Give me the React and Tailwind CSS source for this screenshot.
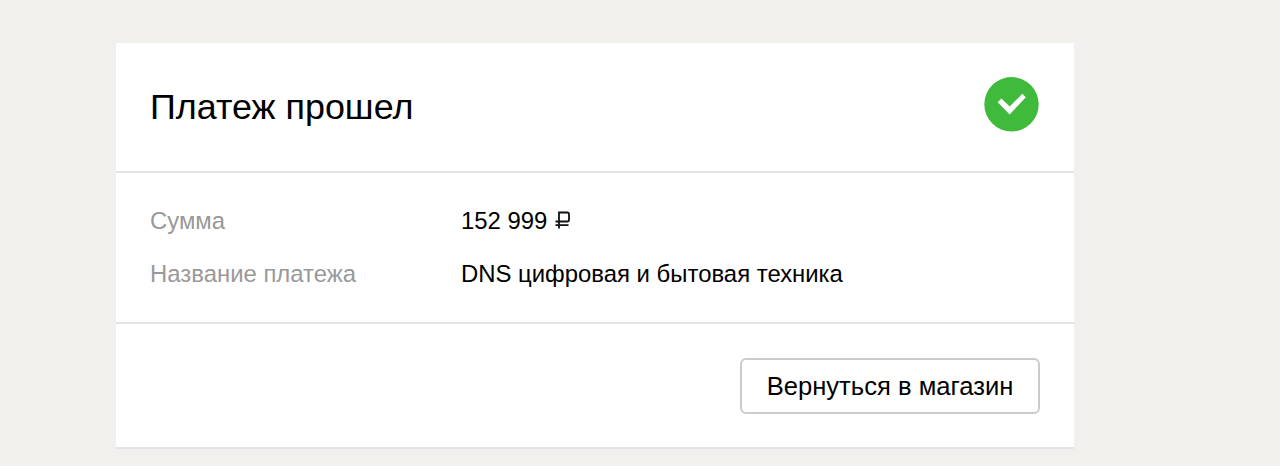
const details = [
  { label: "Сумма", value: "152 999", rouble: true },
  { label: "Название платежа", value: "DNS цифровая и бытовая техника" },
];

const SuccessIcon = () => (
  <svg viewBox="0 0 55 55" className="w-[55px] h-[55px] shrink-0">
    <circle cx="27.5" cy="27.3" r="27.2" fill="#3fba3a" />
    <path
      d="M13.7 25.3 17.4 21.4 25.7 29.6 38.3 16.7 41.8 20.3 25.7 37.4Z"
      fill="#fff"
    />
  </svg>
);

const RoubleIcon = () => (
  <svg
    viewBox="0 0 16 18"
    className="w-4 h-[18px] ml-2 mb-px"
    fill="none"
    stroke="#111"
    strokeWidth="1.8"
  >
    <path d="M4 17.5V1.5h8.3q1.7 0 1.7 1.7v5.6q0 1.7-1.7 1.7H0.5M0.5 14.2h13" />
  </svg>
);

const App = () => {
  return (
    <main className="h-[466px] overflow-hidden bg-[#f1f0ec] pt-[43px] pl-[116px] font-['Liberation_Sans',Arial,sans-serif] text-black">
      <section className="w-[958px] h-[406px] bg-white border-b-2 border-[#e4e4e4]">
        {/* Header */}
        <header className="flex justify-between h-[130px] pl-[34px] pr-[35px] pt-[34px] border-b-2 border-[#e4e4e4]">
          <h1 className="text-[35.9px] leading-[60px]">Платеж прошел</h1>
          <SuccessIcon />
        </header>

        {/* Payment details */}
        <dl className="h-[151px] px-[34px] pt-[21px] border-b-2 border-[#e4e4e4] text-[23.9px] leading-[53px]">
          {details.map(({ label, value, rouble }) => (
            <div key={label} className="flex">
              <dt className="w-[311px] text-[#999]">{label}</dt>
              <dd className="flex items-center">
                {value}
                {rouble && <RoubleIcon />}
              </dd>
            </div>
          ))}
        </dl>

        {/* Actions */}
        <footer className="flex justify-end pt-[34px] pr-[34px]">
          <button className="w-[300px] h-[56px] border-2 border-[#ccc] rounded-md bg-white text-[25.6px]">
            Вернуться в магазин
          </button>
        </footer>
      </section>
    </main>
  );
};

export default App;
